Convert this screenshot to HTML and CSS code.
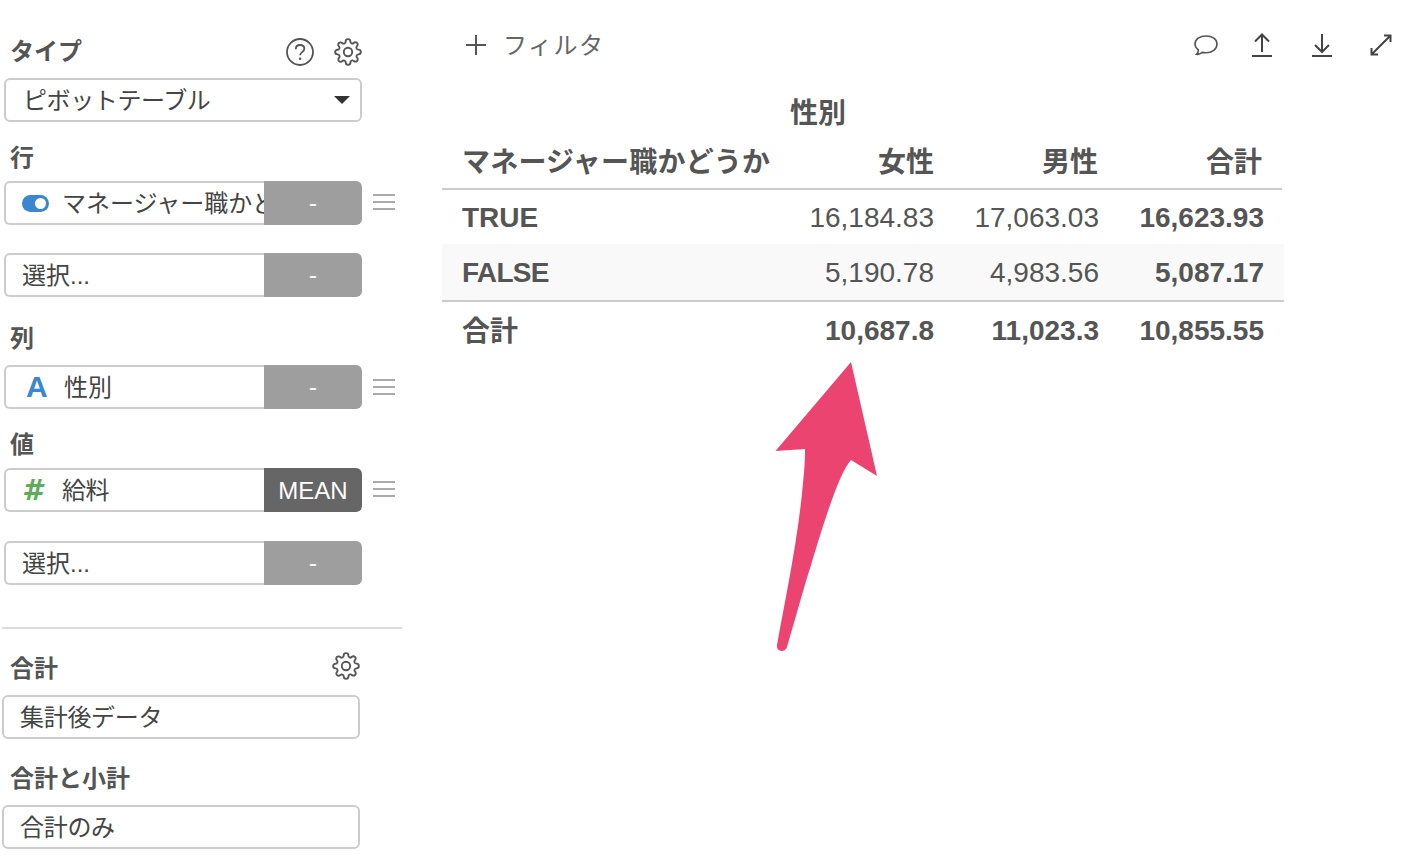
FILE: index.html
```html
<!DOCTYPE html>
<html lang="ja">
<head>
<meta charset="utf-8">
<title>ピボットテーブル</title>
<link rel="stylesheet" href="styles.css">
</head>
<body>
<svg width="0" height="0" class="defs">
  <symbol id="gear" viewBox="0 0 24 24">
    <circle cx="12" cy="12" r="3.6"/>
    <path d="M19.4 15a1.65 1.65 0 0 0 .33 1.82l.06.06a2 2 0 0 1 0 2.83 2 2 0 0 1-2.83 0l-.06-.06a1.65 1.65 0 0 0-1.82-.33 1.65 1.65 0 0 0-1 1.51V21a2 2 0 0 1-2 2 2 2 0 0 1-2-2v-.09A1.65 1.65 0 0 0 9 19.4a1.65 1.65 0 0 0-1.82.33l-.06.06a2 2 0 0 1-2.83 0 2 2 0 0 1 0-2.83l.06-.06a1.65 1.65 0 0 0 .33-1.82 1.65 1.65 0 0 0-1.51-1H3a2 2 0 0 1-2-2 2 2 0 0 1 2-2h.09A1.65 1.65 0 0 0 4.6 9a1.65 1.65 0 0 0-.33-1.82l-.06-.06a2 2 0 0 1 0-2.83 2 2 0 0 1 2.83 0l.06.06a1.65 1.65 0 0 0 1.82.33H9a1.65 1.65 0 0 0 1-1.51V3a2 2 0 0 1 2-2 2 2 0 0 1 2 2v.09a1.65 1.65 0 0 0 1 1.51 1.65 1.65 0 0 0 1.82-.33l.06-.06a2 2 0 0 1 2.83 0 2 2 0 0 1 0 2.83l-.06.06a1.65 1.65 0 0 0-.33 1.82V9a1.65 1.65 0 0 0 1.51 1H21a2 2 0 0 1 2 2 2 2 0 0 1-2 2h-.09a1.65 1.65 0 0 0-1.51 1z"/>
  </symbol>
  <symbol id="bars" viewBox="0 0 22 18">
    <path d="M0 2h22M0 9h22M0 16h22"/>
  </symbol>
</svg>

<div class="page">
  <aside class="sidebar">
    <div class="label-row top-label">
      <span>タイプ</span>
      <span class="label-icons">
        <svg class="icon-help" viewBox="0 0 28 28">
          <circle cx="14" cy="14" r="13"/>
          <path d="M9.800 11.200c0-2.600 1.900-4.200 4.300-4.200s4.200 1.500 4.200 3.700c0 3.400-4.200 3.400-4.200 6.600"/>
          <circle class="dot" cx="14.100" cy="20.800" r="1.300"/>
        </svg>
        <svg class="icon-gear"><use href="#gear"/></svg>
      </span>
    </div>
    <div class="box select-box inset">
      <span>ピボットテーブル</span>
      <span class="caret"></span>
    </div>

    <div class="label-row label-near after-box">行</div>
    <div class="field-row">
      <div class="field">
        <div class="field-main">
          <span class="toggle"></span>
          <span class="field-text clip">マネージャー職かどうか</span>
        </div>
        <div class="field-btn">-</div>
      </div>
      <svg class="bars"><use href="#bars"/></svg>
    </div>
    <div class="field-row next-field">
      <div class="field">
        <div class="field-main"><span class="placeholder">選択...</span></div>
        <div class="field-btn">-</div>
      </div>
    </div>

    <div class="label-row label-far after-select">列</div>
    <div class="field-row">
      <div class="field">
        <div class="field-main">
          <span class="type-a">A</span>
          <span class="field-text">性別</span>
        </div>
        <div class="field-btn">-</div>
      </div>
      <svg class="bars bars-low"><use href="#bars"/></svg>
    </div>

    <div class="label-row label-near after-box">値</div>
    <div class="field-row">
      <div class="field">
        <div class="field-main">
          <span class="type-num">#</span>
          <span class="field-text text-num">給料</span>
        </div>
        <div class="field-btn dark">MEAN</div>
      </div>
      <svg class="bars"><use href="#bars"/></svg>
    </div>
    <div class="field-row next-field-b">
      <div class="field">
        <div class="field-main"><span class="placeholder">選択...</span></div>
        <div class="field-btn">-</div>
      </div>
    </div>

    <hr class="divider">

    <div class="label-row label-far">
      <span>合計</span>
      <svg class="icon-gear gear-b"><use href="#gear"/></svg>
    </div>
    <div class="box plain-box">集計後データ</div>
    <div class="label-row label-far after-plain">合計と小計</div>
    <div class="box plain-box">合計のみ</div>
  </aside>

  <main class="main">
    <div class="toolbar">
      <div class="filter">
        <svg class="plus" viewBox="0 0 20 20"><path d="M10 0v20M0 10h20"/></svg>
        <span class="filter-text">フィルタ</span>
      </div>
      <div class="tools">
        <svg class="tool tool-comment" viewBox="0 0 24 21"><path d="M12 1C5.900 1 1 4.200 1 9c0 2.400 1.300 4.400 3.300 5.800.2 1.700-.5 3.300-1.800 4.500 2.300.2 4.300-.6 5.800-1.900 1.200.3 2.400.4 3.700.4 6.100 0 11-3.600 11-8.800S18.100 1 12 1z"/></svg>
        <svg class="tool tool-up" viewBox="0 0 20 24"><path d="M10 19V1.500M3 8.500l7-7 7 7M0 23h20"/></svg>
        <svg class="tool tool-down" viewBox="0 0 20 24"><path d="M10 1v18M3 12l7 7 7-7M0 23h20"/></svg>
        <svg class="tool tool-expand" viewBox="0 0 24 24"><path d="M3 21L21 3M15 2.500h6.500V9M2.500 15v6.500H9"/></svg>
      </div>
    </div>

    <div class="group-head">性別</div>
    <div class="row head-row">
      <div class="cell first head-first">マネージャー職かどうか</div>
      <div class="cell">女性</div>
      <div class="cell">男性</div>
      <div class="cell">合計</div>
    </div>
    <div class="row data-row">
      <div class="cell first strong">TRUE</div>
      <div class="cell">16,184.83</div>
      <div class="cell">17,063.03</div>
      <div class="cell strong">16,623.93</div>
    </div>
    <div class="row data-row striped">
      <div class="cell first strong tight">FALSE</div>
      <div class="cell">5,190.78</div>
      <div class="cell">4,983.56</div>
      <div class="cell strong">5,087.17</div>
    </div>
    <div class="row data-row total-row">
      <div class="cell first strong cjk-cell">合計</div>
      <div class="cell strong">10,687.8</div>
      <div class="cell strong">11,023.3</div>
      <div class="cell strong">10,855.55</div>
    </div>
  </main>
</div>

<svg class="arrow" viewBox="770 355 112 300">
  <path d="M851 362L877 476L851 460C840 472 826 515 811 565C801 597 795 620 787 647C785 653 776 652 777 645C785 600 798 540 803 483C805 465 805 455 805 449L775.500 451Z"/>
</svg>
</body>
</html>
```

FILE: styles.css
```css
* { box-sizing: border-box; }

html, body {
  margin: 0;
  height: 100%;
  overflow: hidden;
  background: #fff;
}

body {
  position: relative;
  color: #444;
  font-family: "Liberation Sans", "Noto Sans CJK JP", sans-serif;
}

.defs { position: absolute; }

.page {
  display: flex;
  height: 868px;
}

/* Sidebar */
.sidebar {
  width: 402px;
  margin-left: 2px;
  padding-top: 37px;
  flex: none;
  display: flex;
  flex-direction: column;
}

.label-row {
  height: 30px;
  padding-left: 8px;
  display: flex;
  align-items: center;
  justify-content: space-between;
  font-size: 24px;
  font-weight: 700;
  color: #555;
  line-height: 30px;
}

.top-label { margin-bottom: 11px; width: 360px; }
.label-near { margin-bottom: 8px; }
.label-far {
  margin-bottom: 12px;
  padding-top: 2px;
}
.after-box { margin-top: 21px; }
.after-select { margin-top: 26px; }
.after-plain { margin-top: 24px; }

.label-icons {
  display: flex;
  align-items: center;
  gap: 20px;
}

.icon-help {
  width: 28px;
  height: 28px;
  fill: none;
  stroke: #555;
  stroke-width: 1.8;
}
.icon-help .dot { fill: #555; stroke: none; }

.icon-gear {
  width: 28px;
  height: 28px;
  fill: none;
  stroke: #555;
  stroke-width: 1.6;
  stroke-linejoin: round;
}

.gear-b {
  margin-right: 44px;
  margin-bottom: 6px;
}

.box {
  height: 44px;
  width: 358px;
  border: 2px solid #ccc;
  border-radius: 6px;
  display: flex;
  align-items: center;
  font-size: 24px;
  background: #fff;
}

.inset { margin-left: 2px; }

.select-box {
  padding: 0 10px 4px 17px;
  justify-content: space-between;
  letter-spacing: -0.4px;
}

.caret {
  width: 0;
  height: 0;
  margin-top: 4px;
  border-left: 8px solid transparent;
  border-right: 8px solid transparent;
  border-top: 8px solid #333;
}

.plain-box {
  padding: 0 0 4px 16px;
  letter-spacing: -0.3px;
}

.field-row {
  margin-left: 2px;
  display: flex;
  align-items: center;
  gap: 11px;
}

.field-row .bars { margin-bottom: 2px; }
.field-row .bars-low { margin-bottom: 0; }

.next-field { margin-top: 28px; }
.next-field-b { margin-top: 29px; }

.field {
  width: 358px;
  height: 44px;
  display: flex;
  flex: none;
}

.field-main {
  width: 260px;
  flex: none;
  border: 2px solid #ccc;
  border-right: 0;
  border-radius: 6px 0 0 6px;
  display: flex;
  align-items: center;
  overflow: hidden;
  white-space: nowrap;
  font-size: 24px;
}

.field-btn {
  flex: 1;
  background: #9e9e9e;
  color: #fff;
  border-radius: 0 6px 6px 0;
  display: flex;
  align-items: center;
  justify-content: center;
  font-size: 24px;
}

.field-btn.dark {
  background: #666;
  padding-top: 2px;
}

.field-text {
  margin-left: 11px;
  margin-bottom: 4px;
}
.text-num {
  margin-left: 14px;
  letter-spacing: -0.5px;
}
.clip {
  margin-left: 13px;
  letter-spacing: 0;
}

.placeholder {
  margin-left: 16px;
  margin-bottom: 4px;
  letter-spacing: 0;
}

.toggle {
  position: relative;
  margin-left: 16px;
  width: 27px;
  height: 17px;
  flex: none;
  border-radius: 9px;
  background: #3b86d1;
}
.toggle::after {
  content: "";
  position: absolute;
  right: 3px;
  top: 3px;
  width: 11px;
  height: 11px;
  border-radius: 50%;
  background: #fff;
}

.type-a {
  margin-left: 20px;
  width: 27px;
  flex: none;
  color: #3b86d1;
  font-size: 30px;
  font-weight: 700;
}

.type-num {
  margin-left: 16px;
  width: 26px;
  flex: none;
  color: #5eab5c;
  font-family: "DejaVu Sans", sans-serif;
  font-size: 29px;
  font-weight: 700;
  font-style: italic;
}

.bars {
  width: 22px;
  height: 18px;
  fill: none;
  stroke: #aaa;
  stroke-width: 2;
}

.divider {
  width: 400px;
  height: 2px;
  margin: 42px 0 24px;
  border: 0;
  background: #ddd;
}

/* Main */
.main {
  margin-left: 38px;
  width: 970px;
  display: flex;
  flex-direction: column;
}

.toolbar {
  height: 90px;
  display: flex;
  align-items: center;
  justify-content: space-between;
}

.filter {
  margin-left: 24px;
  display: flex;
  align-items: center;
  gap: 17px;
  font-size: 24px;
  color: #666;
  letter-spacing: 1.5px;
}

.filter-text { margin-bottom: 4px; }

.plus {
  width: 20px;
  height: 20px;
  fill: none;
  stroke: #555;
  stroke-width: 2;
}

.tools {
  display: flex;
  align-items: center;
  gap: 34px;
  margin-right: 19px;
}

.tool {
  fill: none;
  stroke: #444;
  stroke-width: 2;
}
.tool-comment { width: 24px; height: 21px; stroke: #555; stroke-width: 1.6; }
.tool-up, .tool-down { width: 20px; height: 24px; }
.tool-down { margin-left: 6px; }
.tool-expand { width: 24px; height: 24px; margin-left: 3px; }

.group-head {
  height: 44px;
  padding-left: 348px;
  font-size: 28px;
  font-weight: 700;
  color: #555;
  line-height: 48px;
}

.row {
  display: grid;
  grid-template-columns: 347px 165px 165px 165px;
  width: 842px;
  align-items: center;
  font-size: 28px;
}

.cell {
  text-align: right;
  padding-right: 20px;
  padding-top: 2px;
  color: #555;
}

.cell.first {
  text-align: left;
  padding-left: 20px;
  padding-right: 0;
  white-space: nowrap;
}

.cell.cjk-cell {
  padding-top: 0;
  padding-bottom: 3px;
}

.strong { font-weight: 700; }
.tight { letter-spacing: -0.7px; }

.head-row {
  grid-template-columns: 347px 164px 164px 164px;
  width: 840px;
  height: 56px;
  padding-bottom: 2px;
  border-bottom: 2px solid #ccc;
  font-weight: 700;
}
.head-row .cell {
  padding-right: 19px;
  padding-top: 0;
}
.head-row .head-first {
  padding-right: 0;
  letter-spacing: 0.2px;
}

.data-row { height: 54px; }

.striped {
  height: 58px;
  background: #f9f9f9;
  border-bottom: 2px solid #ccc;
}

.total-row { height: 56px; }

/* Annotation over the table */
.arrow {
  position: absolute;
  left: 770px;
  top: 355px;
  width: 112px;
  height: 300px;
  fill: #ec4470;
}
```
